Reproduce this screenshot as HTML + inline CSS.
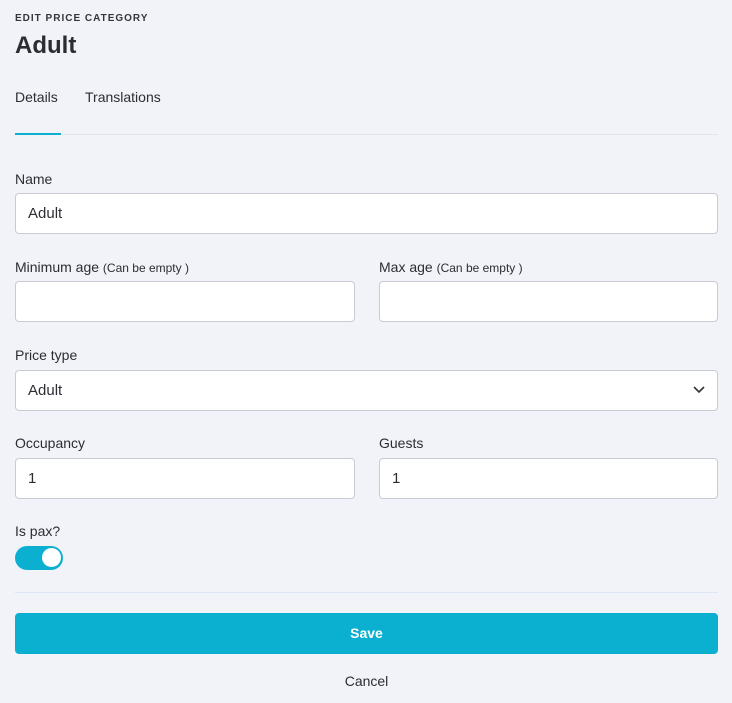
<!DOCTYPE html>
<html><head><style>
body{margin:0;background:#f2f3f8;font-family:"Liberation Sans",sans-serif;color:#2b2d33;width:732px;height:703px;overflow:hidden;position:relative}
.a{position:absolute}
.inp{position:absolute;background:#fff;border:1px solid #c8cbd3;border-radius:4px;box-sizing:border-box;height:41px;font-size:15px;line-height:39px;padding-left:12px}
.lbl{position:absolute;font-size:14px}
.lbl small{font-size:12px}
</style></head><body>
<div class="a" style="left:15px;top:13px;font-size:10px;letter-spacing:1px;font-weight:bold;color:#33363c">EDIT PRICE CATEGORY</div>
<div class="a" style="left:15px;top:32px;font-size:24px;font-weight:bold">Adult</div>
<div class="a" style="left:15px;top:89px;font-size:14px">Details</div>
<div class="a" style="left:85px;top:89px;font-size:14px">Translations</div>
<div class="a" style="left:15px;top:134px;width:703px;height:1px;background:#e0e3ea"></div>
<div class="a" style="left:15px;top:133px;width:46px;height:2px;background:#0bb0d0"></div>
<div class="lbl" style="left:15px;top:171px">Name</div>
<div class="inp" style="left:15px;top:193px;width:703px">Adult</div>
<div class="lbl" style="left:15px;top:259px">Minimum age <small>(Can be empty )</small></div>
<div class="inp" style="left:15px;top:281px;width:340px"></div>
<div class="lbl" style="left:379px;top:259px">Max age <small>(Can be empty )</small></div>
<div class="inp" style="left:379px;top:281px;width:339px"></div>
<div class="lbl" style="left:15px;top:347px">Price type</div>
<div class="inp" style="left:15px;top:370px;width:703px">Adult
<svg style="position:absolute;right:12px;top:15px" width="12" height="8" viewBox="0 0 12 8"><path d="M1 1l5 5 5-5" fill="none" stroke="#333" stroke-width="1.6"/></svg></div>
<div class="lbl" style="left:15px;top:435px">Occupancy</div>
<div class="inp" style="left:15px;top:458px;width:340px">1</div>
<div class="lbl" style="left:379px;top:435px">Guests</div>
<div class="inp" style="left:379px;top:458px;width:339px">1</div>
<div class="lbl" style="left:15px;top:523px">Is pax?</div>
<div class="a" style="left:15px;top:546px;width:48px;height:24px;border-radius:12px;background:#0bb0d0"></div>
<div class="a" style="left:42px;top:548px;width:19px;height:19px;border-radius:50%;background:#fff"></div>
<div class="a" style="left:15px;top:592px;width:703px;height:1px;background:#dde6f2"></div>
<div class="a" style="left:15px;top:613px;width:703px;height:41px;border-radius:4px;background:#0bb0d0;color:#fff;font-size:14px;font-weight:bold;text-align:center;line-height:41px">Save</div>
<div class="a" style="left:15px;top:673px;width:703px;text-align:center;font-size:14px">Cancel</div>
</body></html>
